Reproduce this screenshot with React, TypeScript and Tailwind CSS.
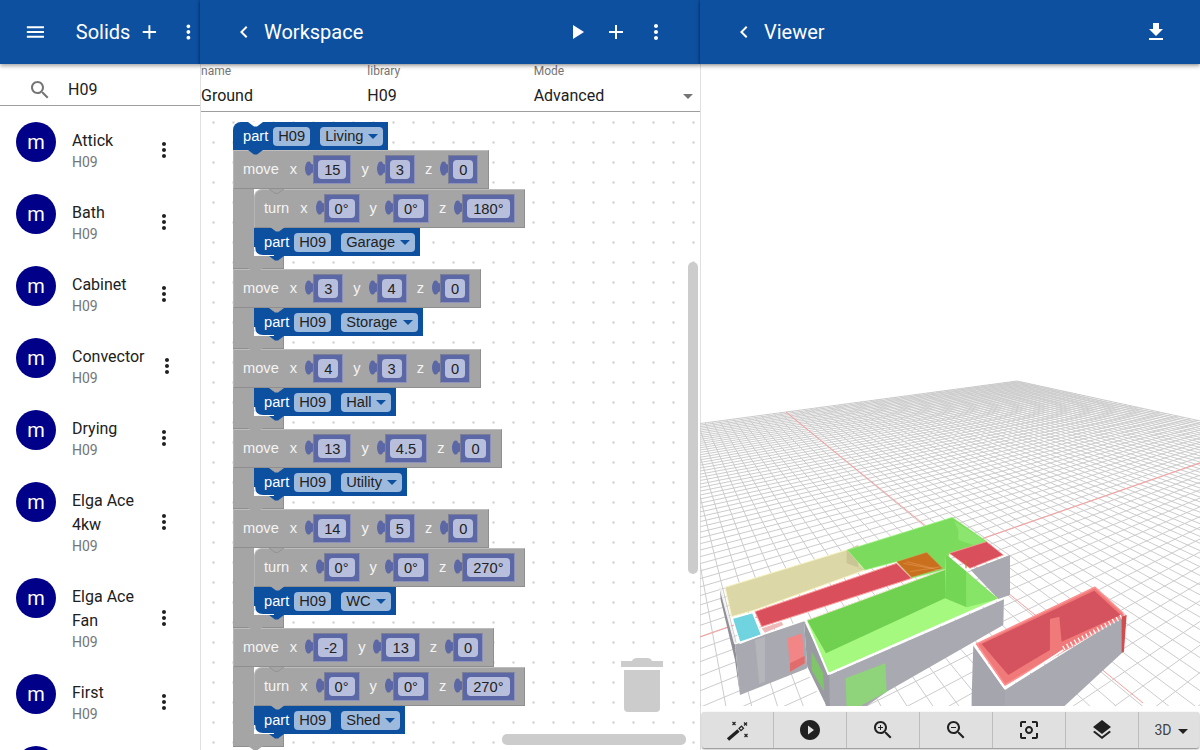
const ICONS = {
  menu: "M3 18h18v-2H3v2zm0-5h18v-2H3v2zm0-7v2h18V6H3z",
  add: "M19 13h-6v6h-2v-6H5v-2h6V5h2v6h6v2z",
  more: "M12 8c1.1 0 2-.9 2-2s-.9-2-2-2-2 .9-2 2 .9 2 2 2zm0 2c-1.1 0-2 .9-2 2s.9 2 2 2 2-.9 2-2-.9-2-2-2zm0 6c-1.1 0-2 .9-2 2s.9 2 2 2 2-.9 2-2-.9-2-2-2z",
  back: "M15.41 7.41L14 6l-6 6 6 6 1.41-1.41L10.83 12z",
  play: "M8 5v14l11-7z",
  download: "M19 9h-4V3H9v6H5l7 7 7-7zM5 18v2h14v-2H5z",
  search:
    "M15.5 14h-.79l-.28-.27C15.41 12.59 16 11.11 16 9.5 16 5.91 13.09 3 9.5 3S3 5.91 3 9.5 5.91 16 9.5 16c1.61 0 3.09-.59 4.23-1.57l.27.28v.79l5 4.99L20.49 19l-4.99-5zm-6 0C7.01 14 5 11.99 5 9.5S7.01 5 9.5 5 14 7.01 14 9.5 11.99 14 9.5 14z",
  playCircle: "M12 2C6.48 2 2 6.48 2 12s4.48 10 10 10 10-4.48 10-10S17.52 2 12 2zm-2 14.5v-9l6 4.5-6 4.5z",
  zoomIn:
    "M15.5 14h-.79l-.28-.27C15.41 12.59 16 11.11 16 9.5 16 5.91 13.09 3 9.5 3S3 5.91 3 9.5 5.91 16 9.5 16c1.61 0 3.09-.59 4.23-1.57l.27.28v.79l5 4.99L20.49 19l-4.99-5zm-6 0C7.01 14 5 11.99 5 9.5S7.01 5 9.5 5 14 7.01 14 9.5 11.99 14 9.5 14zM12 10h-2v2H9v-2H7V9h2V7h1v2h2v1z",
  zoomOut:
    "M15.5 14h-.79l-.28-.27C15.41 12.59 16 11.11 16 9.5 16 5.91 13.09 3 9.5 3S3 5.91 3 9.5 5.91 16 9.5 16c1.61 0 3.09-.59 4.23-1.57l.27.28v.79l5 4.99L20.49 19l-4.99-5zm-6 0C7.01 14 5 11.99 5 9.5S7.01 5 9.5 5 14 7.01 14 9.5 11.99 14 9.5 14zM7 9h5v1H7z",
  focus:
    "M5 15H3v4c0 1.1.9 2 2 2h4v-2H5v-4zM5 5h4V3H5c-1.1 0-2 .9-2 2v4h2V5zm14-2h-4v2h4v4h2V5c0-1.1-.9-2-2-2zm0 16h-4v2h4c1.1 0 2-.9 2-2v-4h-2v4zM12 8c-2.21 0-4 1.79-4 4s1.79 4 4 4 4-1.79 4-4-1.79-4-4-4zm0 6c-1.1 0-2-.9-2-2s.9-2 2-2 2 .9 2 2-.9 2-2 2z",
  layers: "M11.99 18.54l-7.37-5.73L3 14.07l9 7 9-7-1.63-1.27-7.38 5.74zM12 16l7.36-5.73L21 9l-9-7-9 7 1.63 1.27L12 16z",
};

const Icon = ({ d, className }: { d: string; className?: string }) => (
  <svg viewBox="0 0 24 24" className={className ?? "w-6 h-6"} fill="currentColor">
    <path d={d} />
  </svg>
);

const solids = [
  { name: "Attick", h: "h-[72px]" },
  { name: "Bath", h: "h-[72px]" },
  { name: "Cabinet", h: "h-[72px]" },
  { name: "Convector", h: "h-[72px]", wide: true },
  { name: "Drying", h: "h-[72px]" },
  { name: "Elga Ace 4kw", h: "h-[96px]" },
  { name: "Elga Ace Fan", h: "h-[96px]" },
  { name: "First", h: "h-[72px]" },
];

const SolidRow = ({ name, h, wide }: { name: string; h: string; wide?: boolean }) => (
  <div className={`flex shrink-0 pl-4 ${h}`}>
    <div className="mt-4 mr-4 flex h-10 w-10 shrink-0 items-center justify-center rounded-full bg-[#000088] text-xl text-white">
      m
    </div>
    <div className={`shrink-0 pt-[23px] ${wide ? "w-[74px]" : "w-[71px]"}`}>
      <div className="text-base leading-6 text-[#212121]">{name}</div>
      <div className="-mt-px text-sm leading-5 text-[#757575]">H09</div>
    </div>
    <div className="flex w-[42px] shrink-0 items-center justify-center pt-4 text-[#212121]">
      <Icon d={ICONS.more} />
    </div>
  </div>
);

// the little connector on the bottom of a stack block
const Tab = ({ fill }: { fill: string }) => (
  <svg viewBox="0 0 15 5" className="absolute left-[15px] top-full z-10 h-[5px] w-[15px]">
    <path d="M0 0 L6 4.4 H9 L15 0 Z" fill={fill} />
  </svg>
);

const Notch = ({ fill }: { fill: string }) => (
  <svg viewBox="0 0 15 5" className="absolute left-[15px] top-0 h-[5px] w-[15px]">
    <path d="M0 0 L6 4.4 H9 L15 0 Z" fill={fill} />
  </svg>
);

const Value = ({ text }: { text: string }) => (
  <div className="flex shrink-0 items-start">
    <svg viewBox="0 0 8 15" className="mt-[6px] h-[15px] w-2">
      <path d="M8 3.5 C6.5 3.5 6 2.5 5.5 1.5 C5 0.5 3 0 2 1 C0.5 3 0 6 0 7.5 C0 9.5 0.5 12 2 14 C3 15 5 14.5 5.5 13.5 C6 12.5 6.5 11.5 8 11.5 Z" fill="#5c68a6" />
    </svg>
    <div className="flex h-[29px] items-center border border-[#7c7f96] border-b-[#8b91ba] border-r-[#8b91ba] bg-[#5c68a6] px-[4px]">
      <div className="flex h-[19px] items-center rounded-[4px] bg-[#b8bfdc] px-[6px] text-[#222]">{text}</div>
    </div>
  </div>
);

const Xyz = ({ label, values, nested }: { label: string; values: string[]; nested?: boolean }) => (
  <div
    className={`relative flex h-[39px] w-fit items-center border border-[#8f8f8f] border-l-[#b5b5b5] border-t-[#bdbdbd] bg-[#a5a5a5] pl-[9px] text-white ${
      nested ? "rounded-tl-lg border-t-[#8f8f8f] border-l-[#8f8f8f] pr-[9px]" : "pr-[10px]"
    }`}
  >
    {nested && (
      <svg viewBox="0 0 15 5" className="absolute left-[14px] -top-px h-[5px] w-[15px]">
        <path d="M0 0 L6 4.4 H9 L15 0" fill="#a5a5a5" stroke="#8f8f8f" strokeWidth="0.8" />
      </svg>
    )}
    <span className="pb-px text-[#f4f4f4]">{label}</span>
    {values.map((v, i) => (
      <div key={i} className={`flex items-center ${i === 0 ? "ml-[11px]" : "ml-[10px]"}`}>
        <span className="mr-2 w-[7.3px] pb-px text-[#f4f4f4]">{"xyz"[i]}</span>
        <Value text={v} />
      </div>
    ))}
    {nested && <Tab fill="#a5a5a5" />}
  </div>
);

const Part = ({ name, hat, afterTurn }: { name: string; hat?: boolean; afterTurn?: boolean }) => (
  <div
    className={`relative flex h-[28px] w-fit items-center bg-[#0d50a0] pl-[10px] pr-[5px] text-white ${
      hat ? "rounded-tl-lg" : "rounded-bl-lg"
    }`}
  >
    {hat && <Notch fill="#ffffff" />}
    {!hat && !afterTurn && <Notch fill="#a5a5a5" />}
    <span>part</span>
    <div className="ml-[5px] flex h-[19px] items-center rounded-[4px] bg-[#9db9dc] px-[5px] text-[#222]">H09</div>
    <div className="ml-[10px] flex h-[19px] items-center rounded-[4px] bg-[#9db9dc] px-[5px] text-[#222]">
      {name}
      <span className="ml-[5px] mt-[1px] h-0 w-0 border-x-[5px] border-t-[5px] border-x-transparent border-t-[#0d50a0]" />
    </div>
    {!hat && (
      <svg viewBox="0 0 20 10" className="absolute -bottom-px left-0 h-[10px] w-5" fill="none">
        <path d="M0.5 0 Q0.5 8.8 9 8.8 H20" stroke="#ffffff" strokeWidth="1.4" />
      </svg>
    )}
    <Tab fill="#0d50a0" />
  </div>
);

const groups = [
  { move: ["15", "3", "0"], turn: ["0°", "0°", "180°"], part: "Garage" },
  { move: ["3", "4", "0"], part: "Storage" },
  { move: ["4", "3", "0"], part: "Hall" },
  { move: ["13", "4.5", "0"], part: "Utility" },
  { move: ["14", "5", "0"], turn: ["0°", "0°", "270°"], part: "WC" },
  { move: ["-2", "13", "0"], turn: ["0°", "0°", "270°"], part: "Shed" },
];

const MoveGroup = ({ move, turn, part }: { move: string[]; turn?: string[]; part: string }) => (
  <div className="flex flex-col items-start">
    <Xyz label="move" values={move} />
    <div className="flex">
      <div className="w-[21px] bg-[#a5a5a5]" />
      <div className="flex flex-col items-start">
        {turn && <Xyz label="turn" values={turn} nested />}
        <Part name={part} afterTurn={!!turn} />
      </div>
    </div>
    <div className="relative h-[13px] w-[51px] border-b border-r border-[#8f8f8f] bg-[#a5a5a5]">
      <Tab fill="#a5a5a5" />
    </div>
  </div>
);

// maps ground coordinates to the screen: the floor is a square seen in perspective
const G = -0.2534;
const H = -0.4132;
const project = (s: number, t: number) => {
  const w = 1 + G * s + H * t;
  const x = 1017 + (786 - 1017 + G * 786) * s + (1274 - 1017 + H * 1274) * t;
  const y = 381 + (412 - 381 + G * 412) * s + (437 - 381 + H * 437) * t;
  return `${(x / w).toFixed(1)} ${(y / w).toFixed(1)}`;
};

const CELLS = 50;

const gridPath = () => {
  let d = "";
  for (let i = 0; i <= CELLS * 2; i++) {
    const a = i / CELLS;
    d += `M${project(a, 0)}L${project(a, Math.min(2, (0.1 - 1 - G * a) / H))}`;
    d += `M${project(0, a)}L${project(Math.min(2, (0.1 - 1 - H * a) / G), a)}`;
  }
  return d;
};

const Poly = ({ p, f, s, w }: { p: string; f: string; s?: string; w?: number }) => (
  <polygon points={p} fill={f} stroke={s ?? "none"} strokeWidth={w ?? 0} strokeLinejoin="round" />
);

const Scene = () => (
  <svg viewBox="700 64 500 642" className="h-[642px] w-[500px]">
    <path d={gridPath()} stroke="#cccccc" strokeWidth="1" fill="none" />
    <path d="M786 412 L1143 703" stroke="#ff9c9c" strokeWidth="1" />
    <path d="M1200 463 L700 637" stroke="#ff9c9c" strokeWidth="1" />
    {/* coordinates below were read off a 3x crop, so the group scales them back */}
    <g transform="translate(700 500) scale(0.3333)">
      {/* outer walls */}
      <Poly p="60,262 105,432 120,585 105,480 62,300" f="#8f8f96" />
      <Poly p="105,432 312,362 322,505 120,585" f="#a9a9b1" />
      <Poly p="165,420 195,410 195,545 178,552" f="#b5b5bc" />
      <Poly p="263,415 306,400 314,490 270,515" f="#f28585" />
      <Poly p="270,490 314,468 314,490 270,515" f="#e06c6c" />
      <Poly p="312,362 390,525 390,640 375,610 322,505" f="#9a9aa2" />
      <Poly p="335,455 370,520 372,575 335,510" f="#7fc56a" />
      <Poly p="322,500 375,610 372,618 318,510" f="#ffffff" />
      <Poly p="388,525 912,298 910,375 880,392 560,575 470,640 390,640" f="#a9a9b1" />
      <Poly p="437,535 556,490 560,575 440,640" f="#8fd47a" />
      <Poly p="812,210 930,165 930,285 895,297" f="#a9a9b1" />
      <Poly p="820,435 915,570 915,640 815,640 815,590" f="#a5a5ad" />
      <Poly p="915,570 1275,345 1270,455 1070,640 915,640" f="#a9a9b1" />
      {/* floors */}
      <Poly p="75,262 440,150 495,210 165,330 95,350" f="#dcd7a6" s="#f7f4c4" w={3} />
      <Poly p="440,150 475,135 475,205 495,210 440,190" f="#c9c595" />
      <Poly p="442,150 757,52 862,125 748,160 738,208 635,235 590,185 495,210" f="#7bdb5c" s="#a8f78a" w={2} />
      <Poly p="762,62 775,90 775,120 820,135 860,125" f="#8ce56f" />
      <Poly p="165,335 590,190 635,235 185,380" f="#d9505c" s="#ff9a9a" w={3} />
      <Poly p="590,185 680,157 728,205 635,232" f="#c9701f" s="#e0b070" w={1} />
      <path d="M610 190 L720 210 M620 185 L700 205 M630 215 L725 200" stroke="#e8a060" strokeWidth="1.5" />
      <Poly p="97,355 158,338 185,405 120,430" f="#6fd3e0" s="#ffffff" w={4} />
      <Poly p="185,385 245,365 250,375 195,398" f="#eeb8b8" />
      <Poly p="748,160 860,125 910,165 810,205" f="#d9505c" s="#ff9a9a" w={2} />
      <path d="M798 180 V205" stroke="#c9701f" strokeWidth="3" />
      {/* big green room */}
      <Poly p="318,362 735,208 738,163 895,297 385,520" f="#a6f97f" />
      <Poly p="322,362 735,210 735,295 378,460" f="#6fd14f" />
      <Poly p="738,163 800,215 800,322 735,295" f="#74d655" />
      <Poly p="800,215 895,297 800,322" f="#86e466" />
      <path d="M318 362 L385 522 L895 298" fill="none" stroke="#ffffff" strokeWidth="6" />
      <path d="M322 360 L735 208" fill="none" stroke="#f5c8c8" strokeWidth="3" strokeDasharray="5 5" />
      <path d="M105 432 L312 362" fill="none" stroke="#ffffff" strokeWidth="4" />
      <path d="M60 262 L105 432" fill="none" stroke="#f0f0f0" strokeWidth="5" />
      {/* red outbuilding */}
      <Poly p="830,432 1185,262 1275,345 915,555" f="#f07a7a" s="#ff9090" w={5} />
      <Poly p="845,432 1183,272 1262,345 1085,425 1078,350 1050,357 1050,450 925,525" f="#d5535e" />
      <path d="M822 435 L915 565" fill="none" stroke="#ffffff" strokeWidth="6" />
      <path d="M915 565 L1090 450" fill="none" stroke="#ffffff" strokeWidth="5" />
      <path d="M1090 445 L1275 345" fill="none" stroke="#ffffff" strokeWidth="14" strokeDasharray="4 9" />
      <Poly p="1265,350 1280,345 1272,455 1265,458" f="#d24e4e" />
    </g>
  </svg>
);

const ToolButton = ({ children, first }: { children: React.ReactNode; first?: boolean }) => (
  <div className={`flex h-full items-center justify-center border-r border-[#bdbdbd] text-[#212121] ${first ? "w-[72px]" : "w-[73px]"}`}>
    {children}
  </div>
);

export default function App() {
  return (
    <div className="flex h-[750px] w-[1200px] overflow-hidden bg-white font-[Roboto]">
      {/* solids list */}
      <div className="flex w-[200px] shrink-0 flex-col">
        <div className="z-20 flex h-16 shrink-0 items-center bg-[#0d50a0] pl-6 text-white shadow-[0_2px_4px_rgba(0,0,0,0.35)]">
          <Icon d={ICONS.menu} />
          <span className="ml-[29px] w-[55px] text-xl">Solids</span>
          <Icon d={ICONS.add} className="ml-2 h-6 w-6" />
          <Icon d={ICONS.more} className="ml-4 h-6 w-6" />
        </div>
        <div className="flex h-[42px] shrink-0 items-center border-b border-[#9e9e9e] pl-[28px] pt-[10px]">
          <Icon d={ICONS.search} className="h-6 w-6 text-[#757575]" />
          <span className="ml-[16px] text-base text-[#212121]">H09</span>
        </div>
        <div className="flex flex-col">
          {solids.map((s) => (
            <SolidRow key={s.name} {...s} />
          ))}
          <div className="ml-4 mt-4 h-10 w-10 shrink-0 rounded-full bg-[#000088]" />
        </div>
      </div>

      {/* workspace */}
      <div className="flex w-[500px] shrink-0 flex-col">
        <div className="z-20 flex h-16 shrink-0 items-center bg-[#0d50a0] pl-8 text-white shadow-[0_2px_4px_rgba(0,0,0,0.35),-1px_0_2px_rgba(0,0,0,0.2)]">
          <Icon d={ICONS.back} />
          <span className="ml-2 text-xl">Workspace</span>
          <Icon d={ICONS.play} className="ml-[202px] h-6 w-6" />
          <Icon d={ICONS.add} className="ml-[15px] h-6 w-6" />
          <Icon d={ICONS.more} className="ml-4 h-6 w-6" />
        </div>
        <div className="flex min-h-0 flex-1 flex-col border-l border-[#e0e0e0]">
          <div className="grid h-[48px] shrink-0 grid-cols-3 border-b border-[#9e9e9e]">
            {[
              ["name", "Ground"],
              ["library", "H09"],
              ["Mode", "Advanced"],
            ].map(([label, value]) => (
              <div key={label} className="relative">
                <div className="text-xs leading-[14px] text-[#757575]">{label}</div>
                <div className="mt-[6px] text-base leading-[24px] text-[#212121]">{value}</div>
                {label === "Mode" && (
                  <span className="absolute right-[7px] top-[30px] h-0 w-0 border-x-[5px] border-t-[5px] border-x-transparent border-t-[#757575]" />
                )}
              </div>
            ))}
          </div>
          <div className="relative min-h-0 flex-1 overflow-hidden bg-[radial-gradient(circle,#c8c8c8_1px,transparent_1.3px)] bg-[size:20px_20px] bg-[position:2.5px_0.5px] pl-[32px] pt-[10px] font-['Liberation_Sans'] text-[14.67px]">
            <Part name="Living" hat />
            {groups.map((g, i) => (
              <MoveGroup key={i} {...g} />
            ))}
            <svg viewBox="0 0 42 54" className="absolute left-[420px] top-[546px] h-[54px] w-[42px]" fill="#cccccc">
              <path d="M11 3 Q12 0 16 0 H26 Q30 0 31 3 H42 V9 H0 V3 Z" />
              <path d="M3 12 H39 V50 Q39 54 35 54 H7 Q3 54 3 50 Z" />
            </svg>
            <div className="absolute left-[487px] top-[150px] h-[312px] w-[10px] rounded-[5px] bg-[#cccccc]" />
            <div className="absolute left-[301px] top-[622px] h-[11px] w-[184px] rounded-[5px] bg-[#cccccc]" />
          </div>
        </div>
      </div>

      {/* viewer */}
      <div className="flex w-[500px] shrink-0 flex-col">
        <div className="z-20 flex h-16 shrink-0 items-center bg-[#0d50a0] pl-8 text-white shadow-[0_2px_4px_rgba(0,0,0,0.35),-1px_0_2px_rgba(0,0,0,0.2)]">
          <Icon d={ICONS.back} />
          <span className="ml-2 text-xl">Viewer</span>
          <Icon d={ICONS.download} className="ml-auto mr-8 h-6 w-6" />
        </div>
        <div className="flex min-h-0 flex-1 flex-col border-l border-[#e0e0e0]">
          <div className="-ml-px h-[642px] shrink-0 overflow-hidden">
            <Scene />
          </div>
          <div className="ml-px mt-[6px] flex h-[36px] w-[497px] shrink-0 items-center rounded-[2px] bg-[#e0e0e0] shadow-[0_1px_2px_rgba(0,0,0,0.5)]">
            <ToolButton first>
              <svg viewBox="0 0 24 24" className="h-6 w-6" fill="none" stroke="#212121">
                <path d="M2 21.5 L12.5 12.5" strokeWidth="3.4" />
                <path d="M13 10.5 L15.5 8.2 L17.5 10.3 L15 12.6 Z" strokeWidth="1.2" />
                <path d="M6.5 4 l3 3 M9.5 4 l-3 3 M18 4.5 l3 3 M21 4.5 l-3 3 M18.5 16 l3 3 M21.5 16 l-3 3" strokeWidth="1.2" />
              </svg>
            </ToolButton>
            <ToolButton>
              <Icon d={ICONS.playCircle} />
            </ToolButton>
            <ToolButton>
              <Icon d={ICONS.zoomIn} />
            </ToolButton>
            <ToolButton>
              <Icon d={ICONS.zoomOut} />
            </ToolButton>
            <ToolButton>
              <Icon d={ICONS.focus} />
            </ToolButton>
            <ToolButton>
              <Icon d={ICONS.layers} />
            </ToolButton>
            <div className="flex flex-1 items-center justify-center pl-1 text-sm text-[#424242]">
              3D
              <span className="ml-[6px] mt-[2px] h-0 w-0 border-x-[5px] border-t-[5px] border-x-transparent border-t-[#212121]" />
            </div>
          </div>
        </div>
      </div>
    </div>
  );
}
